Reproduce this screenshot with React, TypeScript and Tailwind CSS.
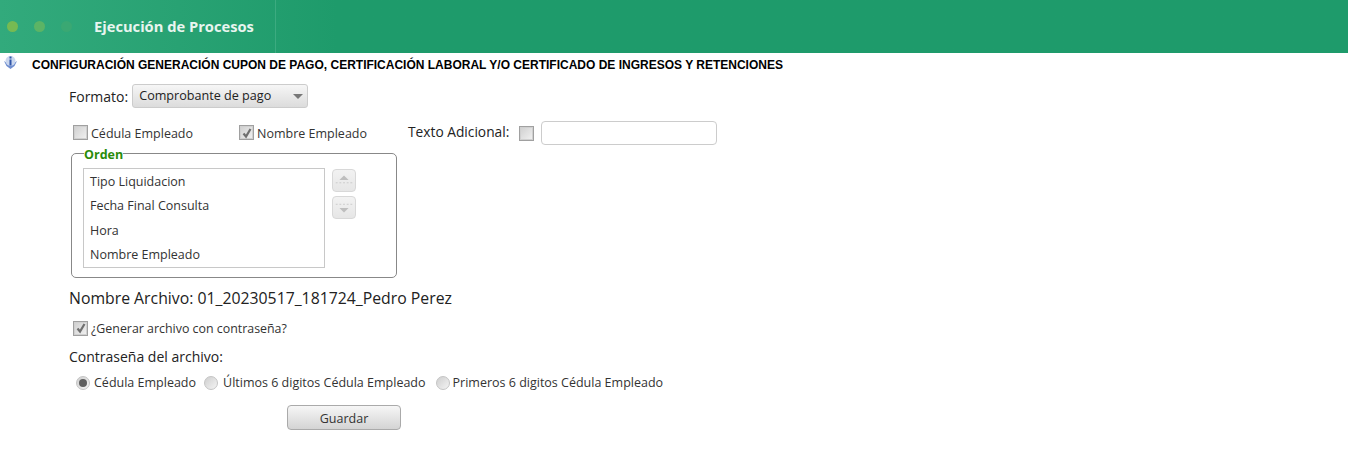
import React from 'react';

const font = { fontFamily: '"Open Sans", sans-serif' };

const Check = ({ checked = false, className = '' }: { checked?: boolean; className?: string }) => (
  <span className={`flex h-[15px] w-[15px] shrink-0 items-center justify-center border border-[#a0a0a0] bg-gradient-to-br from-[#cfcfcf] to-[#f2f2f2] shadow-[inset_0_0_0_1px_#d0d0d0] ${className}`}>
    {checked && (
      <svg viewBox="0 0 12 12" className="h-[12px] w-[12px]">
        <path d="M2.5 6.5 L5 9.5 L9.5 2" fill="none" stroke="#707070" strokeWidth="2.2" />
      </svg>
    )}
  </span>
);

const Radio = ({ checked = false }: { checked?: boolean }) => (
  <span className="flex h-[14px] w-[14px] shrink-0 items-center justify-center rounded-full border border-[#c4c4c4] bg-gradient-to-br from-[#cfcfcf] to-[#f4f4f4]">
    {checked && <span className="h-[8px] w-[8px] rounded-full bg-[#5e5e5e]" />}
  </span>
);

const ArrowButton = ({ up }: { up: boolean }) => (
  <div className="flex h-[23px] w-[24px] items-center justify-center rounded-[4px] border border-[#d8d8d8] bg-gradient-to-b from-[#f2f2f2] to-[#e6e6e6]">
    <svg viewBox="0 0 24 23" className="h-[23px] w-[24px]">
      <path d={up ? 'M7 11 L12 6 L17 11 Z' : 'M7 12 L12 17 L17 12 Z'} fill="#bebebe" />
      <path d={up ? 'M3 14 H21' : 'M3 8 H21'} stroke="#c8c8c8" strokeDasharray="2 2" />
    </svg>
  </div>
);

const Header = () => (
  <div className="flex h-[53px] bg-[#1e9b6b] bg-gradient-to-r from-[#32aa7c] via-[#1e9b6b] via-[25%] to-[#1e9b6b]">
    <div className="flex w-[276px] items-center border-r border-[#3cab80] pl-[7px] pb-[1px]">
      <span className="h-[11px] w-[11px] rounded-full bg-[#76ba52]" />
      <span className="ml-[16px] h-[11px] w-[11px] rounded-full bg-[#5cb465]" />
      <span className="ml-[16px] h-[11px] w-[11px] rounded-full bg-[#3aa873]" />
      <span className="ml-[22px] text-[14.7px] font-bold text-[#e8f5ef]">Ejecución de Procesos</span>
    </div>
  </div>
);

export default function App() {
  return (
    <div style={font} className="h-[457px] w-[1348px] overflow-hidden bg-white text-[#333]">
      <Header />

      <div className="flex h-[22px] items-center pl-[4px]">
        <svg viewBox="0 0 13 13" className="mb-[4px] h-[13px] w-[13px]">
          <path d="M0 5 L2.5 10 L6.5 13 L10.5 10 L13 5 L10 7 H3 Z" fill="#6f8ed0" />
          <circle cx="6.5" cy="5" r="5" fill="#c9d6ee" />
          <rect x="5.5" y="0.5" width="2" height="2" fill="#2f54a8" />
          <rect x="5.5" y="3.5" width="2" height="6" fill="#2f54a8" />
        </svg>
        <h1 style={{ fontFamily: '"Liberation Sans", sans-serif' }} className="ml-[15px] pt-[2px] text-[12px] font-bold text-black">
          CONFIGURACIÓN GENERACIÓN CUPON DE PAGO, CERTIFICACIÓN LABORAL Y/O CERTIFICADO DE INGRESOS Y RETENCIONES
        </h1>
      </div>

      <div className="pl-[69px]">
        <div className="mt-[9px] flex items-center">
          <span className="text-[14px] text-[#222]">Formato:</span>
          <div className="ml-[4px] flex h-[24px] w-[176px] items-center justify-between rounded-[3px] border border-[#ccc] bg-gradient-to-b from-[#f6f6f6] to-[#dcdcdc] pl-[6px] pr-[3px] text-[12.6px] text-[#222]">
            <span>Comprobante de pago</span>
            <svg viewBox="0 0 10 5" className="mr-[1px] h-[5px] w-[10px]">
              <path d="M0 0 H10 L5 5 Z" fill="#777" />
            </svg>
          </div>
        </div>

        <div className="mt-[13px] flex h-[24px] items-center">
          <Check className="mb-[1px] ml-[4px]" />
          <span className="ml-[3px] mt-[3px] text-[12.5px]">Cédula Empleado</span>
          <Check checked className="mb-[1px] ml-[46px]" />
          <span className="ml-[3px] mt-[3px] text-[12.5px]">Nombre Empleado</span>
          <span className="mb-[2px] ml-[41px] text-[13.75px] text-[#222]">Texto Adicional:</span>
          <Check className="ml-[10px]" />
          <div className="ml-[7px] h-[24px] w-[176px] rounded-[4px] border border-[#ccc] bg-white" />
        </div>

        <fieldset className="ml-[2px] mt-[2px] h-[131px] w-[326px] rounded-[5px] border border-[#888] pl-[11px]">
          <legend className="ml-[1px] translate-y-[2px] text-[12.5px] font-bold leading-[12px] text-[#2a8c0a]">Orden</legend>
          <div className="mt-[9px] flex">
            <ul className="h-[100px] w-[242px] border border-[#c8c8c8] pl-[6px] pt-[1px] text-[12.5px] leading-[24.4px]">
              <li>Tipo Liquidacion</li>
              <li>Fecha Final Consulta</li>
              <li>Hora</li>
              <li>Nombre Empleado</li>
            </ul>
            <div className="ml-[7px] mt-[1px] flex flex-col gap-[4px]">
              <ArrowButton up />
              <ArrowButton up={false} />
            </div>
          </div>
        </fieldset>

        <p className="mt-[10px] text-[15.8px] leading-[20px] text-[#222]">Nombre Archivo: 01_20230517_181724_Pedro Perez</p>

        <div className="ml-[4px] mt-[12px] flex h-[18px] items-center">
          <Check checked className="mb-[2px]" />
          <span className="ml-[3px] text-[12.4px]">¿Generar archivo con contraseña?</span>
        </div>

        <p className="mt-[10px] text-[14px] leading-[18px] text-[#222]">Contraseña del archivo:</p>

        <div className="ml-[7px] mt-[8px] flex h-[18px] items-center text-[12.5px]">
          <Radio checked />
          <span className="ml-[4px]">Cédula Empleado</span>
          <span className="ml-[8px]"><Radio /></span>
          <span className="ml-[5px]">Últimos 6 digitos Cédula Empleado</span>
          <span className="ml-[10px]"><Radio /></span>
          <span className="ml-[3px]">Primeros 6 digitos Cédula Empleado</span>
        </div>

        <button className="ml-[218px] mt-[13px] block h-[25px] w-[114px] rounded-[4px] border border-[#aaa] bg-gradient-to-b from-[#f6f6f6] to-[#d4d4d4] pt-[3px] text-[12.5px] text-[#333]">
          Guardar
        </button>
      </div>
    </div>
  );
}
